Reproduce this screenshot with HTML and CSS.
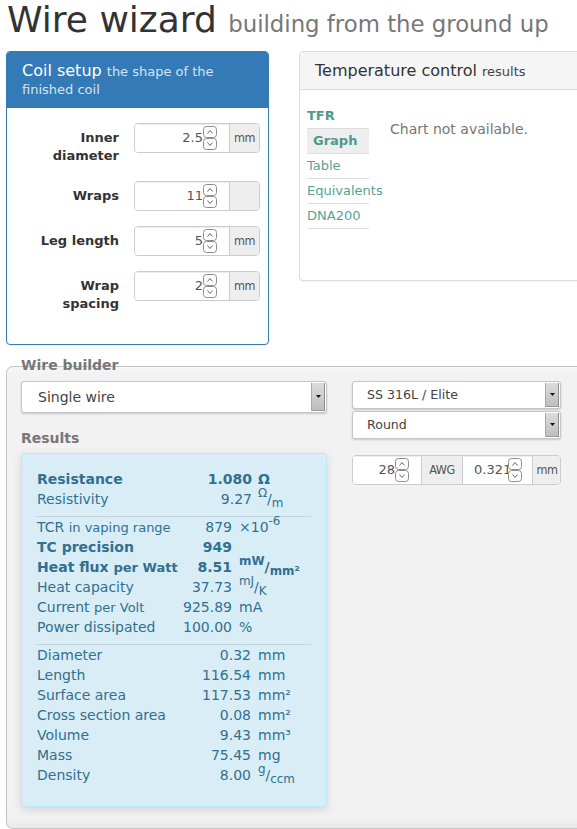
FILE: index.html
```html
<!DOCTYPE html>
<html>
<head>
<meta charset="utf-8">
<link rel="stylesheet" href="styles.css">
</head>
<body>
<div class="page">
  <h1 class="title">Wire wizard <small>building from the ground up</small></h1>

  <div class="top-row">
    <div class="panel coil">
      <div class="coil-heading">Coil setup <small>the shape of the finished coil</small></div>
      <div class="coil-body">
        <div class="form-row">
          <div class="form-label">Inner diameter</div>
          <div class="igroup">
            <div class="inp"><span class="val">2.5</span><svg class="spin" width="14" height="24" viewBox="0 0 14 24"><rect x="0.5" y="0.5" width="13" height="11" rx="3" fill="#fff" stroke="#8c8c8c"/><rect x="0.5" y="12.5" width="13" height="11" rx="3" fill="#fff" stroke="#8c8c8c"/><path d="M4.5 7.5 L7 4.5 L9.5 7.5" fill="none" stroke="#666"/><path d="M4.5 16.5 L7 19.5 L9.5 16.5" fill="none" stroke="#666"/></svg></div>
            <div class="addon">mm</div>
          </div>
        </div>
        <div class="form-row">
          <div class="form-label">Wraps</div>
          <div class="igroup">
            <div class="inp"><span class="val">11</span><svg class="spin" width="14" height="24" viewBox="0 0 14 24"><rect x="0.5" y="0.5" width="13" height="11" rx="3" fill="#fff" stroke="#8c8c8c"/><rect x="0.5" y="12.5" width="13" height="11" rx="3" fill="#fff" stroke="#8c8c8c"/><path d="M4.5 7.5 L7 4.5 L9.5 7.5" fill="none" stroke="#666"/><path d="M4.5 16.5 L7 19.5 L9.5 16.5" fill="none" stroke="#666"/></svg></div>
            <div class="addon"></div>
          </div>
        </div>
        <div class="form-row">
          <div class="form-label">Leg length</div>
          <div class="igroup">
            <div class="inp"><span class="val">5</span><svg class="spin" width="14" height="24" viewBox="0 0 14 24"><rect x="0.5" y="0.5" width="13" height="11" rx="3" fill="#fff" stroke="#8c8c8c"/><rect x="0.5" y="12.5" width="13" height="11" rx="3" fill="#fff" stroke="#8c8c8c"/><path d="M4.5 7.5 L7 4.5 L9.5 7.5" fill="none" stroke="#666"/><path d="M4.5 16.5 L7 19.5 L9.5 16.5" fill="none" stroke="#666"/></svg></div>
            <div class="addon">mm</div>
          </div>
        </div>
        <div class="form-row">
          <div class="form-label">Wrap spacing</div>
          <div class="igroup">
            <div class="inp"><span class="val">2</span><svg class="spin" width="14" height="24" viewBox="0 0 14 24"><rect x="0.5" y="0.5" width="13" height="11" rx="3" fill="#fff" stroke="#8c8c8c"/><rect x="0.5" y="12.5" width="13" height="11" rx="3" fill="#fff" stroke="#8c8c8c"/><path d="M4.5 7.5 L7 4.5 L9.5 7.5" fill="none" stroke="#666"/><path d="M4.5 16.5 L7 19.5 L9.5 16.5" fill="none" stroke="#666"/></svg></div>
            <div class="addon">mm</div>
          </div>
        </div>
      </div>
    </div>

    <div class="panel temp">
      <div class="temp-heading">Temperature control <small>results</small></div>
      <div class="temp-body">
        <div class="tabs">
          <div class="tab head">TFR</div>
          <div class="tab active">Graph</div>
          <div class="tab">Table</div>
          <div class="tab">Equivalents</div>
          <div class="tab">DNA200</div>
        </div>
        <div class="chart-msg">Chart not available.</div>
      </div>
    </div>
  </div>

  <div class="fieldset">
    <div class="legend">Wire builder</div>
    <div class="builder">
      <div class="builder-left">
        <div class="select big"><span class="select-text">Single wire</span><span class="select-btn"><svg width="5" height="3" viewBox="0 0 5 3"><path d="M0 0h5L2.5 3z" fill="#111"/></svg></span></div>
        <div class="results-label">Results</div>
        <div class="well">
          <div class="rgrid g1">
            <div class="b">Resistance</div><div class="v b">1.080</div><div class="u b">Ω</div>
            <div>Resistivity</div><div class="v">9.27</div><div class="u"><sup>Ω</sup>/<sub>m</sub></div>
          </div>
          <hr class="sep">
          <div class="rgrid g2">
            <div>TCR <small>in vaping range</small></div><div class="v">879</div><div class="u">×10<sup>-6</sup></div>
            <div class="b">TC precision</div><div class="v b">949</div><div class="u"></div>
            <div class="b">Heat flux <small>per Watt</small></div><div class="v b">8.51</div><div class="u b"><sup>mW</sup>/<sub>mm²</sub></div>
            <div>Heat capacity</div><div class="v">37.73</div><div class="u"><sup>mJ</sup>/<sub>K</sub></div>
            <div>Current <small>per Volt</small></div><div class="v">925.89</div><div class="u">mA</div>
            <div>Power dissipated</div><div class="v">100.00</div><div class="u">%</div>
          </div>
          <hr class="sep">
          <div class="rgrid g3">
            <div>Diameter</div><div class="v">0.32</div><div class="u">mm</div>
            <div>Length</div><div class="v">116.54</div><div class="u">mm</div>
            <div>Surface area</div><div class="v">117.53</div><div class="u">mm²</div>
            <div>Cross section area</div><div class="v">0.08</div><div class="u">mm²</div>
            <div>Volume</div><div class="v">9.43</div><div class="u">mm³</div>
            <div>Mass</div><div class="v">75.45</div><div class="u">mg</div>
            <div>Density</div><div class="v">8.00</div><div class="u"><sup>g</sup>/<sub>ccm</sub></div>
          </div>
        </div>
      </div>
      <div class="builder-right">
        <div class="select small-sel"><span class="select-text">SS 316L / Elite</span><span class="select-btn"><svg width="5" height="3" viewBox="0 0 5 3"><path d="M0 0h5L2.5 3z" fill="#111"/></svg></span></div>
        <div class="select small-sel second"><span class="select-text">Round</span><span class="select-btn"><svg width="5" height="3" viewBox="0 0 5 3"><path d="M0 0h5L2.5 3z" fill="#111"/></svg></span></div>
        <div class="igroup wire-group">
          <div class="inp w1"><span class="val">28</span><svg class="spin" width="14" height="24" viewBox="0 0 14 24"><rect x="0.5" y="0.5" width="13" height="11" rx="3" fill="#fff" stroke="#8c8c8c"/><rect x="0.5" y="12.5" width="13" height="11" rx="3" fill="#fff" stroke="#8c8c8c"/><path d="M4.5 7.5 L7 4.5 L9.5 7.5" fill="none" stroke="#666"/><path d="M4.5 16.5 L7 19.5 L9.5 16.5" fill="none" stroke="#666"/></svg></div>
          <div class="addon awg">AWG</div>
          <div class="inp w2"><span class="val clip">0.32112</span><svg class="spin" width="14" height="24" viewBox="0 0 14 24"><rect x="0.5" y="0.5" width="13" height="11" rx="3" fill="#fff" stroke="#8c8c8c"/><rect x="0.5" y="12.5" width="13" height="11" rx="3" fill="#fff" stroke="#8c8c8c"/><path d="M4.5 7.5 L7 4.5 L9.5 7.5" fill="none" stroke="#666"/><path d="M4.5 16.5 L7 19.5 L9.5 16.5" fill="none" stroke="#666"/></svg></div>
          <div class="addon mm2">mm</div>
        </div>
      </div>
    </div>
  </div>
</div>
</body>
</html>
```

FILE: styles.css
```css
html, body {
  margin: 0;
  padding: 0;
  overflow: hidden;
  background: #fff;
}
body {
  font-family: "DejaVu Sans", "Noto Sans", sans-serif;
  font-size: 14px;
  line-height: 20px;
  color: #333;
}
small {
  line-height: 1;
}
.page {
  padding-left: 6px;
  width: 640px;
}
.title {
  margin: 0 0 11px 1px;
  font-size: 36px;
  line-height: 1.1;
  font-weight: normal;
  white-space: nowrap;
  color: #333;
}
.title small {
  font-size: 22.8px;
  color: #777;
}

.top-row {
  display: flex;
  align-items: flex-start;
  gap: 30px;
  margin-bottom: 21px;
}
.panel {
  border: 1px solid #ddd;
  border-radius: 4px;
  background: #fff;
  box-shadow: 0 1px 1px rgba(0,0,0,.05);
}
.coil {
  width: 263px;
  box-sizing: border-box;
  border-color: #337ab7;
  flex: none;
}
.coil-heading {
  background: #337ab7;
  color: #fff;
  padding: 10px 15px;
  font-size: 16px;
  line-height: 18px;
  border-radius: 3px 3px 0 0;
}
.coil-heading small {
  font-size: 13px;
  color: #d6e4f1;
}
.coil-body {
  padding: 15px 8px 15px 15px;
}
.form-row {
  display: grid;
  grid-template-columns: 97px 126px;
  column-gap: 15px;
  align-items: start;
  margin-bottom: 15px;
}
.form-label {
  font-weight: bold;
  font-size: 13px;
  line-height: 18px;
  padding: 6px 0 1px 5px;
  text-align: right;
  color: #333;
}

.igroup {
  display: flex;
  height: 30px;
  box-sizing: border-box;
  border: 1px solid #ccc;
  border-radius: 4px;
  overflow: hidden;
  background: #fff;
}
.inp {
  flex: 1;
  min-width: 0;
  box-sizing: border-box;
  display: flex;
  align-items: center;
  justify-content: flex-end;
  padding-right: 12px;
  background: #fff;
  color: #555;
  font-size: 13px;
  box-shadow: inset 0 1px 1px rgba(0,0,0,.075);
}
.val {
  white-space: nowrap;
}
.spin {
  display: block;
  flex: none;
}
.addon {
  width: 30px;
  flex: none;
  box-sizing: border-box;
  border-left: 1px solid #ccc;
  background: #eee;
  color: #555;
  display: flex;
  align-items: center;
  justify-content: center;
  font-family: "DejaVu Sans Condensed", "DejaVu Sans", sans-serif;
  font-stretch: condensed;
  font-size: 12.5px;
  letter-spacing: -0.5px;
}

.temp {
  width: 300px;
  flex: none;
  box-sizing: border-box;
}
.temp-heading {
  background: #f5f5f5;
  border-bottom: 1px solid #ddd;
  padding: 10px 15px;
  font-size: 16px;
  line-height: 17px;
  color: #333;
  border-radius: 3px 3px 0 0;
}
.temp-heading small {
  font-size: 13px;
  color: #444;
}
.temp-body {
  height: 190px;
  box-sizing: border-box;
  padding: 14px 6px 0 7px;
  display: flex;
  align-items: flex-start;
}
.tabs {
  width: 62px;
  flex: none;
}
.tab {
  font-size: 13px;
  line-height: 18px;
  padding: 3px 0;
  border-bottom: 1px solid #ddd;
  color: #58a197;
  white-space: nowrap;
}
.tab.head {
  font-weight: bold;
  color: #4f9a90;
}
.tab.active {
  font-weight: bold;
  background: #eee;
  padding-left: 6px;
  color: #4f9a90;
}
.chart-msg {
  margin: 15px 0 0 21px;
  color: #777;
  font-size: 14px;
  line-height: 20px;
}

.fieldset {
  width: 640px;
  box-sizing: border-box;
  border: 1px solid #c4c4c4;
  border-right: none;
  border-radius: 7px 0 0 7px;
  background: #f2f2f2;
  box-shadow: inset 0 -10px 12px -8px rgba(0,0,0,.06), inset 0 8px 10px -8px rgba(255,255,255,.9);
  padding: 0 0 21px 14px;
}
.legend {
  margin-top: -12px;
  height: 20px;
  line-height: 20px;
  font-weight: bold;
  font-size: 14px;
  color: #777;
}
.builder {
  display: flex;
  gap: 25px;
  margin-top: 6px;
  align-items: flex-start;
}
.builder-left {
  width: 306px;
  flex: none;
}
.builder-right {
  width: 209px;
  flex: none;
}

.select {
  display: flex;
  align-items: stretch;
  box-sizing: border-box;
  border: 1px solid #c6c6c6;
  border-radius: 3px;
  background: #fff;
  box-shadow: 0 1px 2px rgba(0,0,0,.18);
}
.select.big {
  height: 32px;
}
.select.small-sel {
  height: 28px;
}
.select.second {
  margin-top: 2px;
}
.select-text {
  flex: 1;
  display: flex;
  align-items: center;
  padding-left: 16px;
  color: #444;
  font-size: 14px;
}
.small-sel .select-text {
  padding-left: 14px;
  font-size: 12.6px;
}
.select-btn {
  width: 13px;
  flex: none;
  margin: 1px 1px 1px 0;
  background: linear-gradient(#dcdcdc, #bdbdbd);
  border-left: 1px solid #a9a9a9;
  box-shadow: inset -1px 0 0 #8d8d8d, inset 0 -1px 0 #9a9a9a;
  display: flex;
  align-items: center;
  justify-content: center;
}
.select-btn svg {
  display: block;
}

.results-label {
  margin-top: 15px;
  font-weight: bold;
  color: #777;
  line-height: 20px;
}
.well {
  margin-top: 5px;
  background: #d9edf7;
  border: 1px solid #bce8f1;
  border-radius: 4px;
  padding: 15px 15px 21px 15px;
  color: #31708f;
  box-shadow: 0 3px 9px rgba(90,80,140,.18);
}
.rgrid {
  display: grid;
  line-height: 20px;
  white-space: nowrap;
}
.rgrid > div {
  height: 20px;
}
.g1 { grid-template-columns: 140px 75px auto; }
.g2 { grid-template-columns: 145px 50px auto; }
.g3 { grid-template-columns: 150px 64px auto; }
.rgrid .v {
  text-align: right;
}
.rgrid .u {
  padding-left: 7px;
}
.g1 .u {
  padding-left: 6px;
}
.rgrid .b {
  font-weight: bold;
}
.rgrid small {
  font-size: 13px;
}
.rgrid sup, .rgrid sub {
  font-size: 85%;
  line-height: 0;
  position: relative;
  vertical-align: baseline;
}
.rgrid sup {
  top: -0.55em;
}
.rgrid sub {
  bottom: -0.3em;
}
.sep {
  margin: 7px 0 0 0;
  border: 0;
  border-top: 1px solid #c5d3da;
  height: 0;
}

.wire-group {
  margin-top: 16px;
}
.inp.w1 {
  width: 68px;
  flex: none;
}
.addon.awg {
  width: 41px;
}
.inp.w2 {
  width: 70px;
  flex: none;
  border-left: 1px solid #ccc;
  padding-left: 11px;
  padding-right: 10px;
  justify-content: flex-start;
}
.val.clip {
  flex: 1;
  min-width: 0;
  overflow: hidden;
}
.addon.mm2 {
  width: 29px;
}
```
